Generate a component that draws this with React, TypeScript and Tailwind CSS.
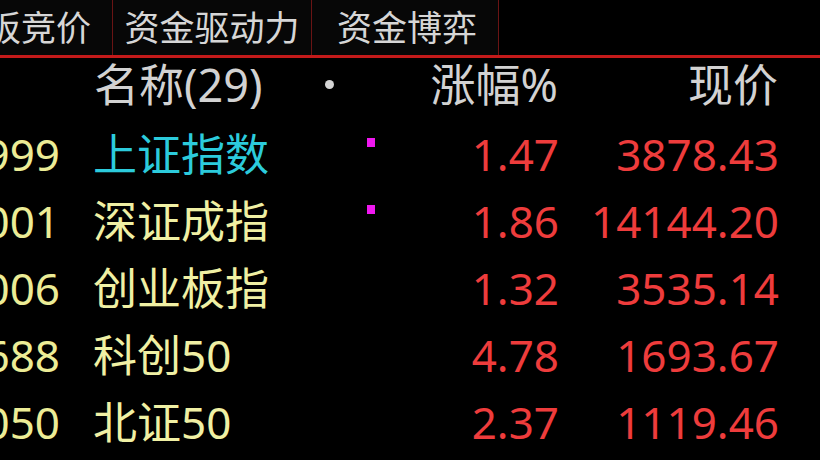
import React from "react";

const rows = [
  { code: "999999", name: "上证指数", chg: "1.47", price: "3878.43", cyan: true, mark: true },
  { code: "399001", name: "深证成指", chg: "1.86", price: "14144.20", mark: true },
  { code: "399006", name: "创业板指", chg: "1.32", price: "3535.14" },
  { code: "000688", name: "科创50", chg: "4.78", price: "1693.67" },
  { code: "899050", name: "北证50", chg: "2.37", price: "1119.46" },
];

export default function App() {
  return (
    <div
      className="w-[820px] h-[460px] overflow-hidden bg-black"
      style={{ fontFamily: '"Noto Sans", "Noto Sans CJK SC", sans-serif' }}
    >
      {/* tab bar */}
      <div className="flex h-[55px] bg-[#070707] text-[35px] leading-none text-[#d6d6d6]">
        <div className="w-[113px] shrink-0 flex justify-end items-center pr-[21px] overflow-hidden whitespace-nowrap border-r border-[#6a1414]">
          <span className="shrink-0">板竞价</span>
        </div>
        <div className="w-[199px] shrink-0 flex justify-center items-center whitespace-nowrap border-r border-[#6a1414]">
          资金驱动力
        </div>
        <div className="w-[187px] shrink-0 flex justify-center items-center whitespace-nowrap border-r border-[#6a1414] pl-[4px]">
          资金博弈
        </div>
        <div className="flex-1 bg-black" />
      </div>
      <div className="h-[3px] bg-[#c41a1a]" />

      {/* header */}
      <div className="flex items-center h-[62px] pb-[9px] text-[45px] leading-none text-[#d2d2d2]">
        <div className="w-[60px] shrink-0" />
        <div className="w-[265px] shrink-0 pl-[34px] whitespace-nowrap">名称(29)</div>
        <div className="w-[9px] h-[9px] shrink-0 rounded-full bg-[#d4d4d4]" />
        <div className="w-[33px] shrink-0" />
        <div className="w-[191px] shrink-0 text-right whitespace-nowrap">涨幅%</div>
        <div className="w-[220px] shrink-0 text-right whitespace-nowrap">现价</div>
      </div>

      {/* rows */}
      {rows.map((r) => (
        <div key={r.code} className="flex items-center h-[67px] text-[44px] leading-none">
          <div className="w-[60px] shrink-0 flex justify-end overflow-hidden text-[#ecec96] whitespace-nowrap">
            <span className="shrink-0">{r.code}</span>
          </div>
          <div
            className={`w-[307px] shrink-0 pl-[33px] whitespace-nowrap ${
              r.cyan ? "text-[#2ccbdc]" : "text-[#f0f0a4]"
            }`}
          >
            {r.name}
          </div>
          <div className="w-[10px] shrink-0 self-stretch pt-[18px]">
            {r.mark && <div className="w-[8px] h-[9px] bg-[#f018f0]" />}
          </div>
          <div className="w-[182px] shrink-0 text-right text-[#ee3c3c] whitespace-nowrap">{r.chg}</div>
          <div className="w-[220px] shrink-0 text-right text-[#ee3c3c] whitespace-nowrap">{r.price}</div>
        </div>
      ))}
    </div>
  );
}
